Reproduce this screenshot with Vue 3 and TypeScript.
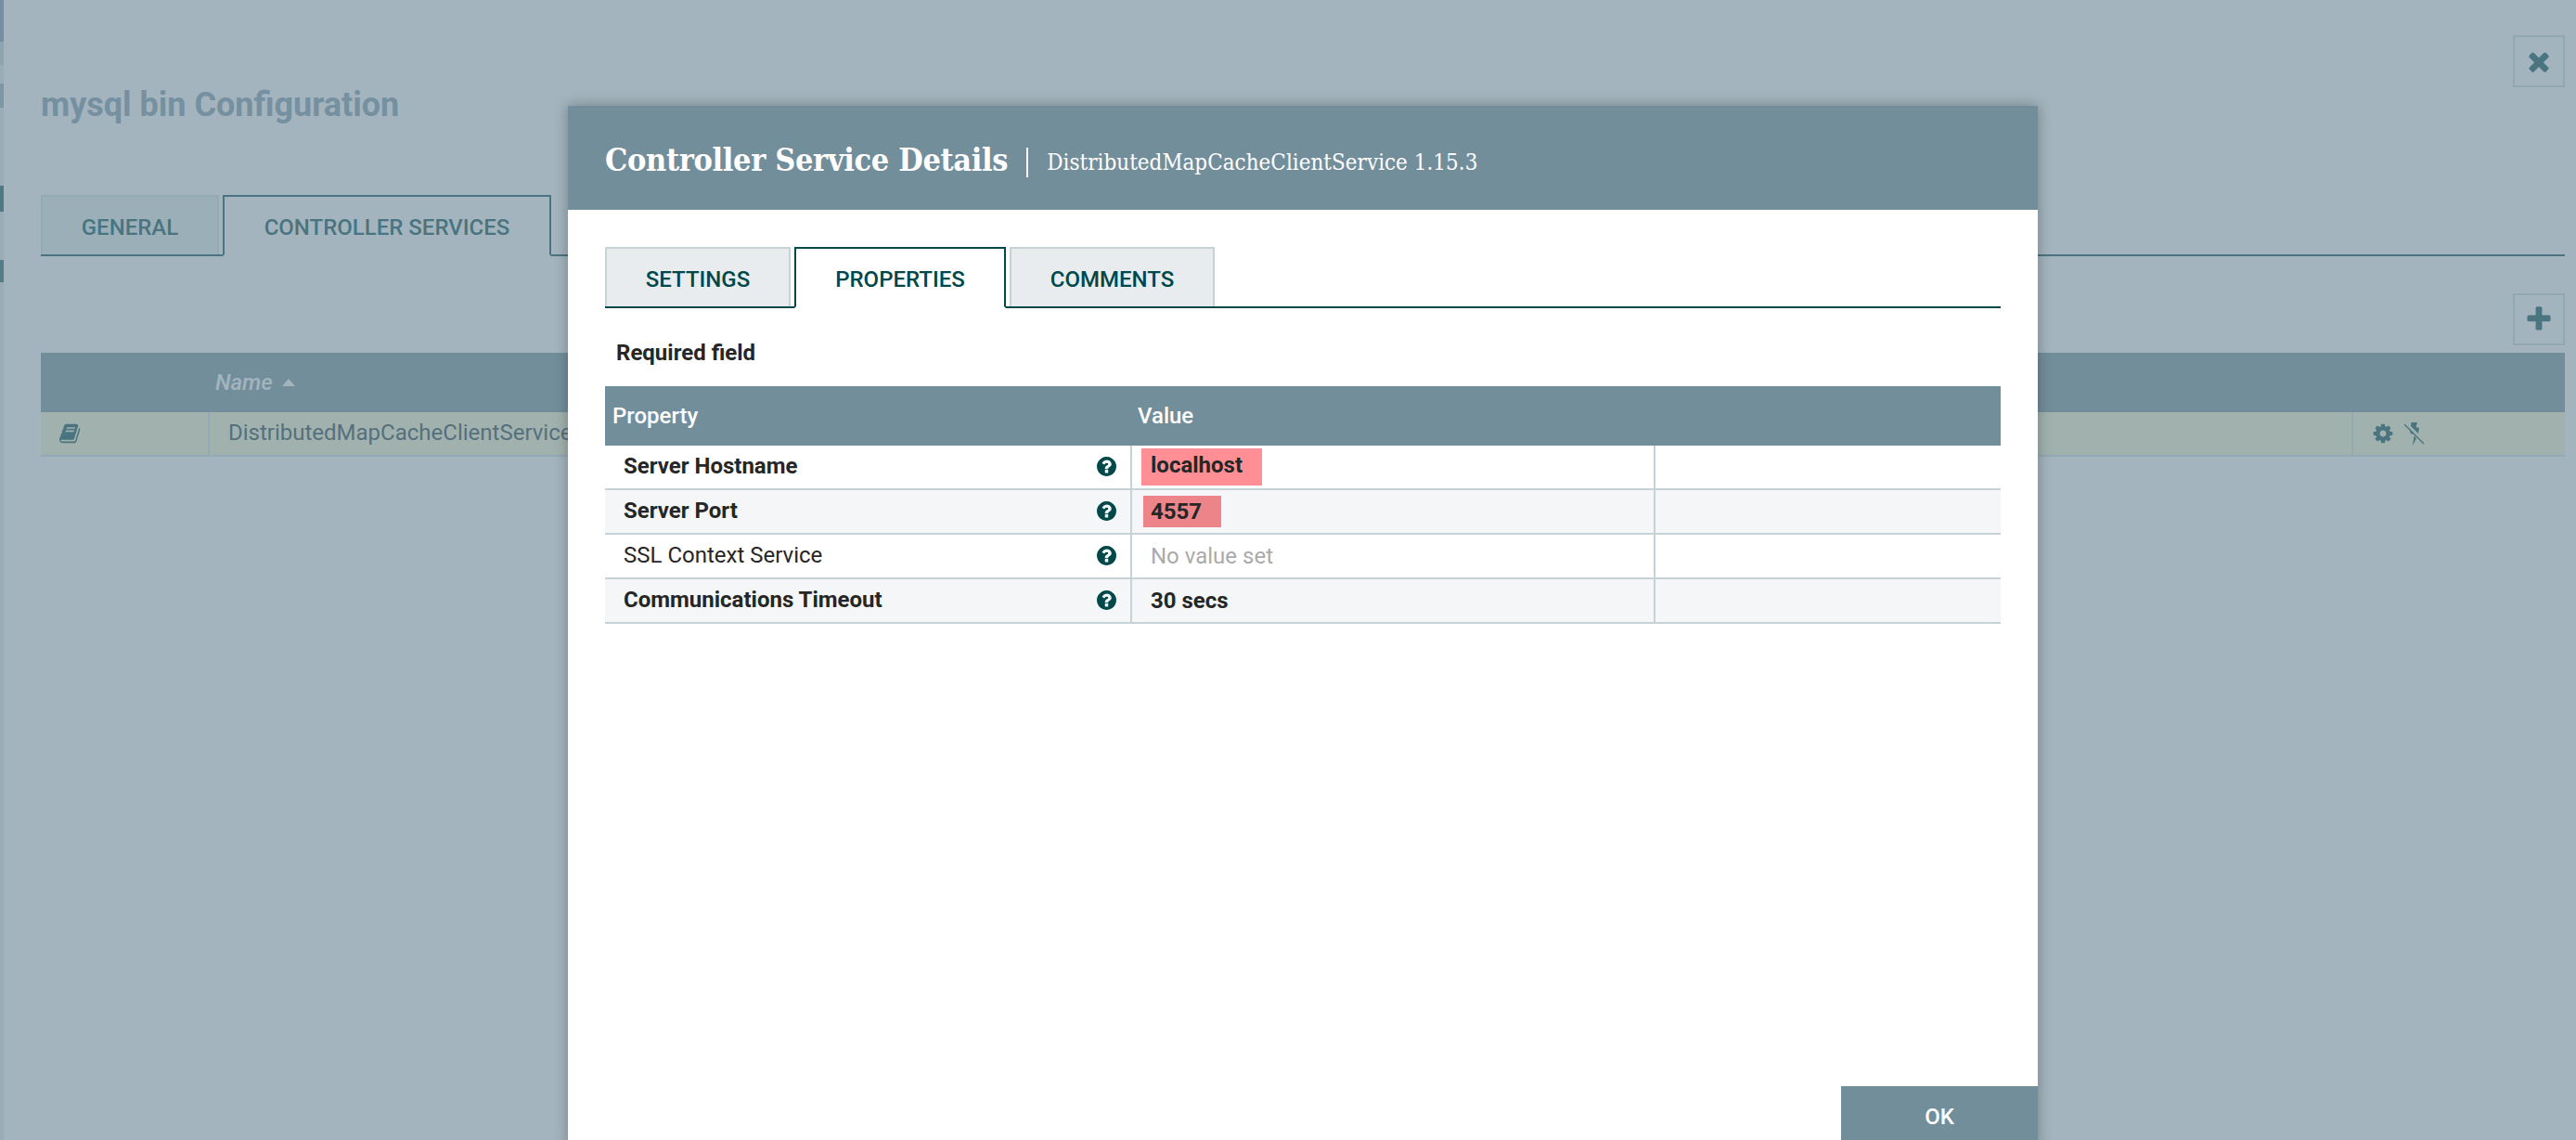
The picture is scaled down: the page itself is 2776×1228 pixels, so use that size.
<script setup lang="ts">
interface Prop { name: string; value: string; required: boolean; flag?: 'light' | 'dark'; unset?: boolean }
const props: Prop[] = [
  { name: 'Server Hostname', value: 'localhost', required: true, flag: 'light' },
  { name: 'Server Port', value: '4557', required: true, flag: 'dark' },
  { name: 'SSL Context Service', value: 'No value set', required: false, unset: true },
  { name: 'Communications Timeout', value: '30 secs', required: true },
]
const helpPath = 'M1024 1376v-192q0-14-9-23t-23-9h-192q-14 0-23 9t-9 23v192q0 14 9 23t23 9h192q14 0 23-9t9-23zm256-672q0-88-55.5-163t-138.5-116-170-41q-243 0-371 213-15 24 8 42l132 100q7 6 19 6 16 0 25-12 53-68 86-92 34-24 86-24 48 0 85.5 26t37.5 59q0 38-20 61t-68 45q-63 28-115.5 86.5t-52.5 125.5v36q0 14 9 23t23 9h192q14 0 23-9t9-23q0-19 21.5-49.5t54.5-49.5q32-18 49-28.5t46-35 44.5-48 28-60.5 12.5-81zm384 192q0 209-103 385.5t-279.5 279.5-385.5 103-385.5-103-279.5-279.5-103-385.5 103-385.5 279.5-279.5 385.5-103 385.5 103 279.5 279.5 103 385.5z'
</script>

<template>
  <div class="page">
    <div class="edge">
      <i class="edge-a"></i><i class="edge-b"></i><i class="edge-c"></i><i class="edge-d"></i><i class="edge-e"></i>
    </div>
    <div class="config">
      <div class="head">
        <h1 class="title">mysql bin Configuration</h1>
        <button class="icon-box">
          <svg width="32" height="32" viewBox="0 0 1792 1792"><path fill="#4a7580" d="M1490 1322q0 40-28 68l-136 136q-28 28-68 28t-68-28l-294-294-294 294q-28 28-68 28t-68-28l-136-136q-28-28-28-68t28-68l294-294-294-294q-28-28-28-68t28-68l136-136q28-28 68-28t68 28l294 294 294-294q28-28 68-28t68 28l136 136q28 28 28 68t-28 68l-294 294 294 294q28 28 28 68z"/></svg>
        </button>
      </div>
      <div class="bg-tabs">
        <div class="bg-tab">GENERAL</div>
        <div class="bg-tab active">CONTROLLER SERVICES</div>
      </div>
      <div class="add-row">
        <button class="icon-box">
          <svg width="32" height="32" viewBox="0 0 1792 1792"><path fill="#4a7580" d="M1600 736v192q0 40-28 68t-68 28h-416v416q0 40-28 68t-68 28h-192q-40 0-68-28t-28-68v-416h-416q-40 0-68-28t-28-68v-192q0-40 28-68t68-28h416v-416q0-40 28-68t68-28h192q40 0 68 28t28 68v416h416q40 0 68 28t28 68z"/></svg>
        </button>
      </div>
      <div class="bg-table">
        <div class="bg-thead"><span class="bg-name">Name</span><i class="sort"></i></div>
        <div class="bg-row">
          <div class="bg-c1">
            <svg width="24" height="24" viewBox="0 0 1792 1792"><path fill="#4a7580" d="M1639 478q40 57 18 129l-275 906q-19 64-76.5 107.5t-122.5 43.5h-923q-77 0-148.5-53.5t-99.5-131.5q-24-67-2-127 0-4 3-27t4-37q1-8-3-21.5t-3-19.5q2-11 8-21t16.5-23.5 16.5-23.5q23-38 45-91.5t30-91.5q3-10 .5-30t-.5-28q3-11 17-28t17-23q21-36 42-92t25-90q1-9-2.5-32t.5-28q4-13 22-30.5t22-22.5q19-26 42.5-84.5t27.5-96.5q1-8-3-25.5t-2-26.5q2-8 9-18t18-23 17-21q8-12 16.5-30.5t15-35 16-36 19.5-32 26.5-23.5 36-11.5 47.5 5.5l-1 3q38-9 51-9h761q74 0 114 56t18 130l-274 906q-36 119-71.5 153.5t-128.5 34.5h-869q-27 0-38 15-11 16-1 43 24 70 144 70h923q29 0 56-15.5t35-41.5l300-987q7-22 5-57 38 15 59 43zm-1064 2q-4 13 2 22.5t20 9.5h608q13 0 25.5-9.5t16.5-22.5l21-64q4-13-2-22.5t-20-9.5h-608q-13 0-25.5 9.5t-16.5 22.5zm-83 256q-4 13 2 22.5t20 9.5h608q13 0 25.5-9.5t16.5-22.5l21-64q4-13-2-22.5t-20-9.5h-608q-13 0-25.5 9.5t-16.5 22.5z"/></svg>
          </div>
          <div class="bg-c2">DistributedMapCacheClientService</div>
          <div class="bg-c3">
            <svg width="24" height="24" viewBox="0 0 1792 1792"><path fill="#4a7580" d="M1152 896q0-106-75-181t-181-75-181 75-75 181 75 181 181 75 181-75 75-181zm512-109v222q0 12-8 23t-20 13l-185 28q-19 54-39 91 35 50 107 138 10 12 10 25t-9 23q-27 37-99 108t-94 71q-12 0-26-9l-138-108q-44 23-91 38-16 136-29 186-7 28-36 28h-222q-14 0-24.5-8.5t-11.5-21.5l-28-184q-49-16-90-37l-141 107q-10 9-25 9-14 0-25-11-126-114-165-168-7-10-7-23 0-12 8-23 15-21 51-66.5t54-70.5q-27-50-41-99l-183-27q-13-2-21-12.5t-8-23.5v-222q0-12 8-23t19-13l186-28q14-46 39-92-40-57-107-138-10-12-10-24 0-10 9-23 26-36 98.5-107.5t94.5-71.5q13 0 26 10l138 107q44-23 91-38 16-136 29-186 7-28 36-28h222q14 0 24.5 8.5t11.5 21.5l28 184q49 16 90 37l142-107q9-9 24-9 13 0 25 10 129 119 165 170 7 8 7 22 0 12-8 23-15 21-51 66.5t-54 70.5q26 50 41 98l183 28q13 2 21 12.5t8 23.5z"/></svg>
            <svg width="22" height="26" viewBox="0 0 22 26"><path fill="#4a7580" d="M7 1h7l-1.500 5 3.500 1-1 6-8-8 .5-4z M5 8l6 6-4-1z M10.500 15.500l2.500 2.500-4 8z"/><path stroke="#4a7580" stroke-width="1.300" fill="none" d="M0 3l21 21"/></svg>
          </div>
        </div>
      </div>
    </div>

    <div class="dialog">
      <div class="d-head">
        <span class="d-title">Controller Service Details</span>
        <span class="d-sub">DistributedMapCacheClientService 1.15.3</span>
      </div>
      <div class="d-body">
        <div class="tabs">
          <div class="tab">SETTINGS</div>
          <div class="tab active">PROPERTIES</div>
          <div class="tab">COMMENTS</div>
        </div>
        <div class="req">Required field</div>
        <div class="grid">
          <div class="ghead"><span class="gh-prop">Property</span><span class="gh-val">Value</span></div>
          <div v-for="(p, i) in props" :key="p.name" class="grow" :class="{ odd: i % 2 === 1 }">
            <div class="g-name" :class="{ strong: p.required }">
              <span>{{ p.name }}</span>
              <svg width="21" height="21" viewBox="128 128 1536 1536"><path fill="#004849" :d="helpPath"/></svg>
            </div>
            <div class="g-val">
              <span class="val" :class="[p.flag, { strong: p.required, unset: p.unset }]">{{ p.value }}</span>
            </div>
            <div class="g-extra"></div>
          </div>
        </div>
      </div>
      <div class="d-foot"><button class="ok">OK</button></div>
    </div>
  </div>
</template>

<style>
html, body { margin: 0; padding: 0; }
</style>

<style scoped>
.page {
  position: relative;
  width: 2776px;
  height: 1228px;
  overflow: hidden;
  background: #a3b4be;
  font-family: Roboto, "Liberation Sans", sans-serif;
}
.edge { position: absolute; left: 0; top: 0; width: 4px; height: 100%; background: #9aacb5; }
.edge i { position: absolute; left: 0; width: 4px; display: block; }
.edge-a { top: 0; height: 45px; background: #7290a0; }
.edge-b { top: 45px; height: 25px; background: #8ea5b0; }
.edge-c { top: 90px; height: 26px; background: #7d98a4; }
.edge-d { top: 200px; height: 28px; background: #4f7883; }
.edge-e { top: 280px; height: 24px; background: #557d88; }

.config { padding: 38px 12px 0 44px; }
.head { display: flex; justify-content: space-between; align-items: flex-start; height: 172px; }
.title {
  margin: 54px 0 0;
  font-size: 36px;
  line-height: 42px;
  font-weight: 700;
  color: #7590a0;
}
.icon-box {
  width: 56px;
  height: 56px;
  box-sizing: border-box;
  border: 2px solid #90a8b2;
  background: transparent;
  padding: 0;
  display: flex;
  align-items: center;
  justify-content: center;
}
.bg-tabs { display: flex; gap: 4px; height: 64px; border-bottom: 2px solid #4a7580; box-sizing: content-box; }
.bg-tab {
  width: 192px;
  box-sizing: border-box;
  height: 64px;
  padding-top: 4px;
  border: 2px solid #94aab4;
  border-bottom: none;
  background: #9bafb8;
  color: #4a7580;
  font-size: 24px;
  font-weight: 500;
  display: flex;
  align-items: center;
  justify-content: center;
}
.bg-tab.active {
  width: 354px;
  height: 66px;
  background: #a3b4be;
  border: 2px solid #4a7580;
  border-bottom: 2px solid #a3b4be;
}
.add-row { display: flex; justify-content: flex-end; margin-top: 40px; }
.bg-table { margin-top: 8px; }
.bg-thead {
  height: 64px;
  background: #728e9b;
  display: flex;
  align-items: center;
  padding-left: 188px;
  gap: 10px;
}
.bg-name { font-size: 24px; font-style: italic; font-weight: 500; color: #a3b4be; }
.sort { width: 0; height: 0; border-left: 7px solid transparent; border-right: 7px solid transparent; border-bottom: 8px solid #a3b4be; }
.bg-row {
  height: 46px;
  background: #a1b2ae;
  border-bottom: 2px solid #94a9b5;
  display: flex;
  align-items: stretch;
}
.bg-c1 { width: 182px; box-sizing: border-box; padding-left: 20px; display: flex; align-items: center; border-right: 2px solid #94a9b5; }
.bg-c2 { flex: 1; padding-left: 20px; font-size: 24px; line-height: 44px; color: #55707d; border-right: 2px solid #94a9b5; }
.bg-c3 { width: 228px; box-sizing: border-box; padding-left: 20px; display: flex; align-items: center; gap: 11px; }

.dialog {
  position: absolute;
  left: 612px;
  top: 114px;
  width: 1584px;
  height: 1122px;
  background: #fff;
  box-shadow: 0 0 14px rgba(0, 0, 0, 0.3);
  display: flex;
  flex-direction: column;
}
.d-head {
  height: 112px;
  box-sizing: border-box;
  flex: none;
  background: #728e9b;
  color: #fff;
  display: flex;
  align-items: center;
  padding: 4px 0 0 40px;
  font-family: "DejaVu Serif Condensed", "DejaVu Serif", "Liberation Serif", serif;
  font-stretch: condensed;
}
.d-title { font-size: 34px; font-weight: 700; letter-spacing: -0.35px; padding-right: 20px; line-height: 40px; }
.d-sub { font-size: 24px; padding-left: 20px; line-height: 32px; margin-top: 6px; border-left: 2px solid #fff; }
.d-body { flex: 1; padding: 40px 40px 0; min-height: 0; }
.tabs { display: flex; gap: 4px; border-bottom: 2px solid #004849; height: 64px; }
.tab {
  box-sizing: border-box;
  height: 64px;
  width: 200px;
  padding-top: 4px;
  border: 2px solid #c7d2d7;
  border-bottom: none;
  background: #e8ecef;
  color: #004849;
  font-size: 24px;
  font-weight: 500;
  display: flex;
  align-items: center;
  justify-content: center;
}
.tab:nth-child(2) { width: 228px; height: 66px; background: #fff; border: 2px solid #004849; border-bottom: 2px solid #fff; }
.tab:nth-child(3) { width: 221px; }
.req { margin: 37px 0 0 12px; font-size: 24px; line-height: 22px; font-weight: 700; color: #262626; height: 22px; }
.grid { margin-top: 25px; }
.ghead {
  height: 64px;
  background: #728e9b;
  color: #fff;
  font-size: 24px;
  font-weight: 500;
  display: flex;
  align-items: center;
}
.gh-prop { width: 574px; padding-left: 8px; box-sizing: border-box; }
.grow { display: flex; height: 46px; border-bottom: 2px solid #c7d2d7; box-sizing: content-box; background: #fff; }
.grow.odd { background: #f4f6f7; }
.g-name {
  width: 568px;
  box-sizing: border-box;
  padding: 0 15px 2px 20px;
  border-right: 2px solid #c7d2d7;
  display: flex;
  align-items: center;
  justify-content: space-between;
  font-size: 24px;
  color: #262626;
}
.g-val { width: 564px; box-sizing: border-box; border-right: 2px solid #c7d2d7; padding-left: 10px; display: flex; align-items: center; }
.g-extra { flex: 1; }
.strong { font-weight: 700; }
.val { font-size: 24px; color: #262626; padding: 0 10px; }
.val.unset { color: #aaa; font-weight: 400; }
.val.light { background: #ff8f95; height: 40px; line-height: 36px; width: 130px; box-sizing: border-box; }
.val.dark { background: #ec8489; height: 34px; line-height: 34px; width: 84px; margin-left: 2px; box-sizing: border-box; padding-left: 8px; }
.d-foot { display: flex; justify-content: flex-end; flex: none; }
.ok {
  width: 212px;
  height: 66px;
  border: none;
  background: #728e9b;
  color: #fff;
  font-family: Roboto, sans-serif;
  font-size: 24px;
  font-weight: 500;
  padding: 0;
}
</style>
